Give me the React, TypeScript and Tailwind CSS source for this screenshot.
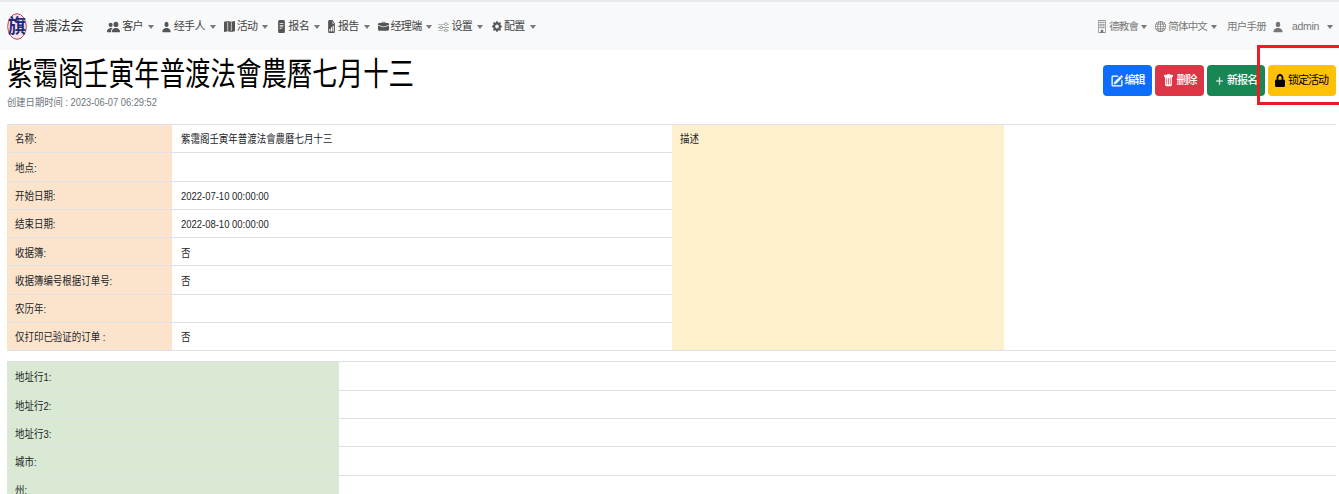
import React from "react";
import { BsPeopleFill, BsPersonFill, BsMapFill, BsFileTextFill, BsFileEarmarkBarGraphFill, BsBriefcaseFill, BsSliders, BsGearFill, BsGlobe, BsPencilSquare, BsTrashFill, BsPlusLg, BsBuilding } from "react-icons/bs";
import { FaLock } from "react-icons/fa";

const Caret = ({ cls = "ml-[5px]" }: { cls?: string }) => <span className={`${cls} inline-block h-0 w-0 border-x-[3px] border-t-[4px] border-x-transparent border-t-[#777]`} />;

const sq = { preserveAspectRatio: "none" as const };
const bold = { stroke: "currentColor", strokeWidth: 0.7 };

const nav: [React.ReactNode, string, string][] = [
  [<BsPeopleFill {...sq} className="h-[14px] w-[13px]" />, "客户", ""],
  [<BsPersonFill {...sq} className="h-[14px] w-[11px]" />, "经手人", "ml-[7px]"],
  [<BsMapFill {...sq} className="h-[11px] w-[11px]" />, "活动", "ml-[8px]"],
  [<BsFileTextFill {...sq} className="h-[13px] w-[9px]" />, "报名", "ml-[9px]"],
  [<BsFileEarmarkBarGraphFill {...sq} className="h-[13px] w-[9px]" />, "报告", "ml-[7px]"],
  [<BsBriefcaseFill {...sq} className="h-[11px] w-[11px]" />, "经理端", "ml-[8px]"],
  [<BsSliders {...sq} className="h-[10px] w-[11px] text-[#888]" />, "设置", "ml-[6px]"],
  [<BsGearFill {...sq} className="h-[11px] w-[10px]" />, "配置", "ml-[9px]"],
];

const rows: [string, string][] = [
  ["名称:", "紫霭阁壬寅年普渡法會農曆七月十三"],
  ["地点:", ""],
  ["开始日期:", "2022-07-10 00:00:00"],
  ["结束日期:", "2022-08-10 00:00:00"],
  ["收据簿:", "否"],
  ["收据簿编号根据订单号:", "否"],
  ["农历年:", ""],
  ["仅打印已验证的订单 :", "否"],
];

const addr = ["地址行1:", "地址行2:", "地址行3:", "城市:", "州:"];

const T = ({ children }: { children: React.ReactNode }) => (
  <span className="inline-block origin-left scale-x-[0.86] whitespace-nowrap">{children}</span>
);

export default function App() {
  return (
    <div className="relative h-[494px] w-[1339px] overflow-hidden bg-white text-[11px] text-[#212529]" style={{ fontFamily: '"Liberation Sans","Noto Sans CJK SC",sans-serif' }}>
      <nav className="flex h-[50px] items-center border-t-2 border-[#e9e9e9] bg-[#f8f9fa] pl-[7px] pr-[6px] text-[#444]">
        <svg width="20" height="27" viewBox="0 0 20 27" className="shrink-0">
          <rect width="20" height="27" fill="#fff" />
          <ellipse cx="10" cy="13.5" rx="9.3" ry="12.8" fill="#f6e4e8" stroke="#b5405c" strokeWidth="1" />
          <text x="10" y="20" textAnchor="middle" fontSize="19" fontWeight="700" fill="#1e2a78" textLength="18" lengthAdjust="spacingAndGlyphs">旗</text>
        </svg>
        <span className="ml-[5px] text-[13px] tracking-[-0.2px] text-[#333]">普渡法会</span>
        <div className="ml-[24px] mt-[1px] flex items-center text-[11px] tracking-[-0.7px]">
          {nav.map(([icon, label, cls]) => (
            <span key={label} className={`flex items-center ${cls}`}>
              <span className="mr-[2px] text-[#555]">{icon}</span>
              {label}
              <Caret />
            </span>
          ))}
        </div>
        <div className="ml-auto mt-[1px] flex items-center text-[10.5px] text-[#777] tracking-[-0.8px]">
          <BsBuilding {...sq} className="mr-[2px] h-[13px] w-[10px]" />
          <span>德教會</span>
          <Caret cls="ml-[3px]" />
          <BsGlobe {...sq} className="ml-[8px] mr-[2px] h-[11px] w-[11px]" />
          <span>简体中文</span>
          <Caret cls="ml-[4px]" />
          <span className="ml-[10px]">用户手册</span>
          <BsPersonFill {...sq} className="ml-[6px] h-[14px] w-[12px]" />
          <span className="ml-[8px] tracking-[-0.3px]">admin</span>
          <Caret cls="ml-[8px]" />
        </div>
      </nav>

      <header className="flex items-start justify-between pl-[7px] pr-[3px]">
        <div>
          <h1 className="mt-[3px] origin-left scale-x-[0.795] whitespace-nowrap text-[32px] leading-[42px] text-black">紫霭阁壬寅年普渡法會農曆七月十三</h1>
          <p className="mt-[1px] origin-left scale-x-[0.93] whitespace-nowrap text-[10px] leading-[14px] text-[#6c757d]">创建日期时间 : 2023-06-07 06:29:52</p>
        </div>
        <div className="mt-[15px] flex gap-[3px] text-[11px] tracking-[-1px] text-white">
          <button className="flex h-[31px] w-[49px] items-center justify-center gap-[2px] rounded-[4px] bg-[#0d6efd] font-medium"><BsPencilSquare {...sq} {...bold} className="h-[12px] w-[12px]" />编辑</button>
          <button className="flex h-[31px] w-[49px] items-center justify-center gap-[3px] rounded-[4px] bg-[#dc3545] font-medium"><BsTrashFill {...sq} className="h-[13px] w-[11px]" />删除</button>
          <button className="flex h-[31px] w-[58px] items-center justify-center gap-[3px] rounded-[4px] bg-[#198754] font-medium"><BsPlusLg {...sq} {...bold} className="h-[10px] w-[9px]" />新报名</button>
          <button className="flex h-[31px] w-[68px] items-center gap-[3px] rounded-[4px] bg-[#ffc107] pl-[7px] tracking-[-1px] text-black"><FaLock {...sq} className="h-[13px] w-[10px]" />锁定活动</button>
        </div>
      </header>

      <div className="px-[7px] pt-[14px]">
        <table className="w-[1329px] table-fixed border-collapse border-t border-[#dee2e6]">
          <colgroup>
            <col className="w-[165px]" />
            <col className="w-[500px]" />
            <col className="w-[332px]" />
            <col className="w-[332px]" />
          </colgroup>
          <tbody>
            {rows.map(([k, v], i) => (
              <tr key={k} className="h-[28.3px]">
                <td className="border-b border-[#dee2e6] bg-[#fce4cc] px-[8px] pt-[2px] align-middle"><T>{k}</T></td>
                <td className="border-b border-[#dee2e6] pl-[9px] pt-[2px] align-middle"><T>{v}</T></td>
                {i === 0 && <td rowSpan={8} className="border-b border-[#dee2e6] bg-[#fff0cd] px-[8px] pt-[6px] align-top"><T>描述</T></td>}
                {i === 0 && <td rowSpan={8} className="border-b border-[#dee2e6]" />}
              </tr>
            ))}
          </tbody>
        </table>

        <table className="mt-[10px] w-[1329px] table-fixed border-collapse border-t border-[#dee2e6]">
          <colgroup>
            <col className="w-[332px]" />
            <col />
          </colgroup>
          <tbody>
            {addr.map((k) => (
              <tr key={k} className="h-[28.3px]">
                <td className="border-b border-[#dee2e6] bg-[#d9e9d3] px-[8px] pt-[3px] align-middle"><T>{k}</T></td>
                <td className="border-b border-[#dee2e6]" />
              </tr>
            ))}
          </tbody>
        </table>
      </div>

      <div className="absolute left-[1257px] top-[45px] h-[60px] w-[82px] border-[3px] border-r-0 border-[#ed1c24]" />
    </div>
  );
}
